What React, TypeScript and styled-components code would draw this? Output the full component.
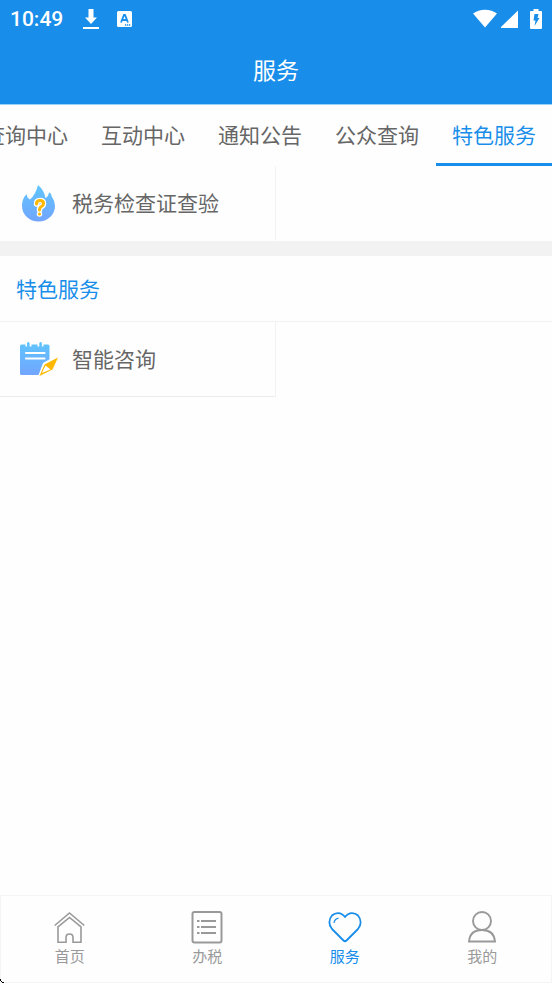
import React from 'react';
import styled, { createGlobalStyle } from 'styled-components';

const BLUE = '#188eea';

const GlobalStyle = createGlobalStyle`
  * { box-sizing: border-box; }
  body {
    margin: 0;
    background: #fefefe;
    color: #666;
    font-family: "Noto Sans CJK SC", sans-serif;
  }
  button { font: inherit; color: inherit; background: none; border: 0; padding: 0; cursor: pointer; }
  a { color: inherit; text-decoration: none; }
  h1, h2 { margin: 0; font-weight: 400; }
  svg { display: block; flex: none; }
`;

const Page = styled.div`
  min-height: 100vh;
  display: flex;
  flex-direction: column;
  overflow: hidden;
`;

const Header = styled.header`
  background: ${BLUE};
  color: #fff;
  border-bottom: 1px solid #9bd0f8;
`;

const StatusBar = styled.div`
  height: 38px;
  padding: 0 10px;
  display: flex;
  align-items: center;
  justify-content: space-between;
`;

const StatusGroup = styled.div`
  display: flex;
  align-items: center;
`;

const StatusIcons = styled(StatusGroup)`
  gap: 18px;
  margin-left: 20px;
`;

const Clock = styled.time`
  font: 500 21px/38px Roboto, sans-serif;
`;

const Network = styled(StatusGroup)`
  gap: 4px;
  margin-right: 12px;
`;

const Title = styled.h1`
  padding-bottom: 3px;
  font-size: 23px;
  line-height: 63px;
  text-align: center;
`;

const TabBar = styled.nav`
  display: flex;
  justify-content: flex-end;
  gap: 1px;
`;

const Tab = styled.button<{ $active?: boolean }>`
  flex: none;
  height: 61px;
  padding: 0 16px;
  font-size: 21px;
  line-height: 58px;
  white-space: nowrap;
  border-bottom: 3px solid ${(p) => (p.$active ? BLUE : 'transparent')};
  color: ${(p) => (p.$active ? BLUE : '#666')};
`;

const Section = styled.section`
  & + & { border-top: 15px solid #f2f2f2; }
`;

const SectionTitle = styled.h2`
  padding: 0 16px;
  font-size: 21px;
  line-height: 65px;
  color: ${BLUE};
  border-bottom: 1px solid #f2f2f2;
`;

const Grid = styled.div`
  display: grid;
  grid-template-columns: 1fr 1fr;
`;

const Service = styled.a<{ $underlined?: boolean }>`
  height: 75px;
  padding-left: 18px;
  display: flex;
  align-items: center;
  gap: 12px;
  font-size: 21px;
  border-right: 1px solid #f2f2f2;
  border-bottom: 1px solid ${(p) => (p.$underlined ? '#ececec' : 'transparent')};
`;

const ServiceName = styled.span`
  padding-bottom: 2px;
`;

const BottomNav = styled.nav`
  height: 88px;
  margin-top: auto;
  display: grid;
  grid-template-columns: repeat(4, 1fr);
  position: relative;
  border: 1px solid #f4f4f4;
`;

const NavItem = styled.a<{ $active?: boolean }>`
  padding-top: 14px;
  display: flex;
  flex-direction: column;
  align-items: center;
  gap: 1px;
  font-size: 15px;
  line-height: 22px;
  color: ${(p) => (p.$active ? BLUE : '#999')};
`;

const Corner = styled.svg`
  position: absolute;
  left: -1px;
  bottom: -1px;
`;

const Download = () => (
  <svg width="16" height="22" viewBox="0 0 16 22" fill="#fff" aria-hidden="true">
    <path d="M5.500 1h5v8.500h3.500L8 16 2 9.500h3.500zM0 19h16v2H0z" />
  </svg>
);

const LetterBadge = () => (
  <svg width="15" height="16" viewBox="0 0 15 16" aria-hidden="true">
    <rect width="15" height="16" rx="1.500" fill="#fff" />
    <path d="M4 11.500 7 4h1l3 7.500M5 9h5" fill="none" stroke={BLUE} strokeWidth="1.800" />
    <path d="M8 14h1.300M10 14h1.300M12 14h1.300" stroke={BLUE} strokeWidth="1.300" />
  </svg>
);

const Wifi = () => (
  <svg width="24" height="20" viewBox="0 0 24 20" fill="#fff" aria-hidden="true">
    <path d="M0 4.500Q5 .7 12 .7T24 4.500L12 18.500z" />
  </svg>
);

const Signal = () => (
  <svg width="17" height="20" viewBox="0 0 17 20" fill="#fff" aria-hidden="true">
    <path d="M17 1.500V19H0V18z" />
  </svg>
);

const Battery = () => (
  <svg width="12" height="20" viewBox="0 0 12 20" aria-hidden="true">
    <path d="M3.500 0h5v2H11q1 0 1 1v16q0 1-1 1H1q-1 0-1-1V3q0-1 1-1h2.500z" fill="#fff" />
    <path d="M4.500 5h4L7.500 9H9.500L4.500 17 5.500 11.500H3.500z" fill={BLUE} />
  </svg>
);

const Flame = () => (
  <svg width="42" height="42" viewBox="0 0 42 42" aria-hidden="true">
    <defs>
      <linearGradient id="flame" x1="0" y1="0" x2="0" y2="1">
        <stop stopColor="#5fc5fd" />
        <stop offset="1" stopColor="#72a5ff" />
      </linearGradient>
    </defs>
    <path d="M8.500 12Q9 16 12 17.500Q18 12 20 3Q26 8 27.500 16Q30 15 31 10.500Q33 10.500 33.500 14Q37 19 37 24A16.500 15.500 0 0 1 4 24Q4 17 8.500 12Z" fill="url(#flame)" />
    <g fill="none" strokeLinecap="round" strokeLinejoin="round">
      <path d="M18.500 22q0-3.500 3.500-3.500t3.500 3q0 2-2 3-2 1-2 3.500M21.500 32v.1" stroke="#fff" strokeWidth="5.500" />
      <path d="M18.500 22q0-3.500 3.500-3.500t3.500 3q0 2-2 3-2 1-2 3.500M21.500 32v.1" stroke="#ffb800" strokeWidth="3" />
    </g>
  </svg>
);

const Notebook = () => (
  <svg width="42" height="42" viewBox="0 0 42 42" aria-hidden="true">
    <defs>
      <linearGradient id="notebook" x1="0" y1="0" x2="0" y2="1">
        <stop stopColor="#5fc5fd" />
        <stop offset="1" stopColor="#72a5ff" />
      </linearGradient>
    </defs>
    <path d="M3.500 6.500H7.500V8.500H9V5q1.300-1.800 2.600 0V8.500H13.500V6.500H19.500V8.500H21.300V5q1.300-1.800 2.600 0V8.500H25.500V6.500H30q1.500 0 1.500 1.500V35.500q0 1.500-1.500 1.500H3.500Q2 37 2 35.500V8q0-1.500 1.500-1.500Z" fill="url(#notebook)" />
    <path d="M8 15h18.500M8 20.500h18.500" stroke="#fff" strokeWidth="2.200" strokeLinecap="round" />
    <path d="M20 38.500 25 25 33 20.500 42 17V38.500Z" fill="#fefefe" />
    <path d="M21.500 38 26.500 26.500 40 19.500 34.500 31.500Z" fill="#ffb800" />
    <path d="M24 35 27.500 27.500 32.500 31.500Z" fill="#fff" />
  </svg>
);

const Home = () => (
  <svg width="32" height="34" viewBox="0 0 32 34" fill="none" stroke="currentColor" strokeWidth="1.600" aria-hidden="true">
    <path d="M.700 15.500 15.500 3l14.800 12.500M4 17v15.200h8V27.500q0-3.500 3.500-3.500t3.500 3.500v4.700h8V17L15.500 7.500z" />
  </svg>
);

const List = () => (
  <svg width="32" height="34" viewBox="0 0 32 34" fill="none" stroke="currentColor" strokeWidth="2" aria-hidden="true">
    <rect x="1.500" y="2" width="29" height="30.500" rx="2" />
    <path d="M6 11h2.500M10 11h15M6 17h2.500M10 17h15M6 23h2.500M10 23h15" />
  </svg>
);

const Heart = () => (
  <svg width="34" height="34" viewBox="0 0 34 34" fill="none" stroke="currentColor" strokeWidth="1.800" strokeLinejoin="round" aria-hidden="true">
    <path d="M17 7C13 1.500 7 2.500 4 5.500C.5 9.500.5 15 4 19L15.500 30.500Q17 32 18.500 30.500L30 19C33.500 15 33.500 9.500 30 5.500C27 2.500 21 1.500 17 7Z" />
    <path d="M6 13q.5-4 4.500-4.800" strokeWidth="1.200" />
  </svg>
);

const Person = () => (
  <svg width="30" height="34" viewBox="0 0 30 34" fill="none" stroke="currentColor" strokeWidth="1.900" aria-hidden="true">
    <circle cx="15" cy="11" r="9" />
    <path d="M2 31.500q1-11.500 13-11.500t13 11.500z" />
  </svg>
);

const tabs = ['查询中心', '互动中心', '通知公告', '公众查询', '特色服务'];

const navItems = [
  { label: '首页', icon: <Home /> },
  { label: '办税', icon: <List /> },
  { label: '服务', icon: <Heart />, active: true },
  { label: '我的', icon: <Person /> },
];

export default function App() {
  return (
    <Page>
      <GlobalStyle />
      <Header>
        <StatusBar>
          <StatusGroup>
            <Clock>10:49</Clock>
            <StatusIcons>
              <Download />
              <LetterBadge />
            </StatusIcons>
          </StatusGroup>
          <StatusGroup>
            <Network>
              <Wifi />
              <Signal />
            </Network>
            <Battery />
          </StatusGroup>
        </StatusBar>
        <Title>服务</Title>
      </Header>
      <TabBar>
        {tabs.map((tab, i) => (
          <Tab key={tab} type="button" $active={i === tabs.length - 1}>{tab}</Tab>
        ))}
      </TabBar>
      <main>
        <Section>
          <Grid>
            <Service href="#inspection">
              <Flame />
              <ServiceName>税务检查证查验</ServiceName>
            </Service>
          </Grid>
        </Section>
        <Section>
          <SectionTitle>特色服务</SectionTitle>
          <Grid>
            <Service href="#consult" $underlined>
              <Notebook />
              <ServiceName>智能咨询</ServiceName>
            </Service>
          </Grid>
        </Section>
      </main>
      <BottomNav>
        {navItems.map((item) => (
          <NavItem key={item.label} href={`#${item.label}`} $active={item.active}>
            {item.icon}
            {item.label}
          </NavItem>
        ))}
        <Corner width="4" height="4" viewBox="0 0 4 4" aria-hidden="true">
          <path d="M0 0h1v2H0zM1 2h1v1H1zM2 3h2v1H2z" fill="#000" />
        </Corner>
      </BottomNav>
    </Page>
  );
}
